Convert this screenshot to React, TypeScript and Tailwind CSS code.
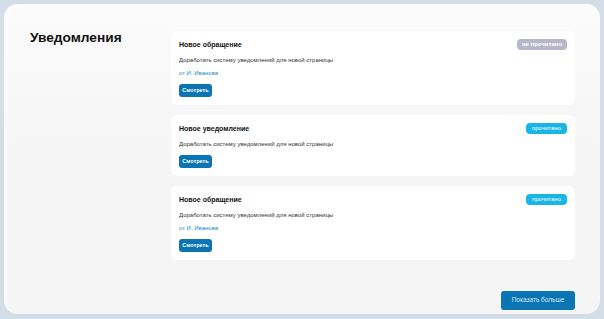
import React from "react";

type Notice = {
  title: string;
  text: string;
  author?: string;
  read: boolean;
};

const notices: Notice[] = [
  {
    title: "Новое обращение",
    text: "Доработать систему уведомлений для новой страницы",
    author: "от И. Иванова",
    read: false
  },
  {
    title: "Новое уведомление",
    text: "Доработать систему уведомлений для новой страницы",
    read: true
  },
  {
    title: "Новое обращение",
    text: "Доработать систему уведомлений для новой страницы",
    author: "от И. Иванова",
    read: true
  }
];

const Badge = ({ read }: { read: boolean }) =>
  read ? (
    <span className="flex h-[11px] w-[41px] items-center justify-center rounded-[4px] bg-[#17b6e4] text-[6px] leading-none text-white">
      прочитано
    </span>
  ) : (
    <span className="flex h-[11px] w-[50px] items-center justify-center rounded-[4px] bg-[#b8b7c9] text-[6px] font-bold leading-none text-white">
      не прочитано
    </span>
  );

const NoticeCard = ({ item }: { item: Notice }) => (
  <div className="flex flex-col rounded-[6px] bg-white px-2 pb-2 pt-2">
    {/* header */}
    <div className="flex h-[10px] items-center justify-between">
      <span className="text-[7px] font-bold leading-none text-[#111]">
        {item.title}
      </span>
      <Badge read={item.read} />
    </div>
    <p className="mt-[6px] h-[10px] text-[6px] leading-[10px] text-[#333]">
      {item.text}
    </p>
    {item.author && (
      <p className="mt-[3px] h-[10px] text-[6px] leading-[10px] text-[#1a8ec4]">
        {item.author}
      </p>
    )}
    <button className="mt-[6px] flex h-[13px] w-[33px] items-center justify-center rounded-[3px] bg-[#0b74b3] text-[5.5px] font-bold leading-none text-white">
      Смотреть
    </button>
  </div>
);

const App = () => {
  return (
    <div
      className="h-[319px] w-[604px] bg-[#d4dee9] pb-[5px] pl-[4px] pr-[4px] pt-[4px]"
      style={{ fontFamily: '"Liberation Sans", Arial, sans-serif' }}
    >
      <div className="flex h-full rounded-[14px] bg-gradient-to-b from-[#fbfbfb] via-[#f5f5f5] to-[#f5f5f5] pl-[26px] pr-[25px] pt-[24px] pb-[4px] shadow-[inset_2px_3px_4px_rgba(255,255,255,0.9)]">
        {/* left column */}
        <div className="w-[141px] shrink-0">
          <h1 className="text-[13.7px] font-bold leading-[20px] text-[#111]">
            Уведомления
          </h1>
        </div>
        {/* right column */}
        <div className="flex w-[404px] flex-col">
          <div className="mt-[3px] flex flex-col gap-[10px]">
            {notices.map((item, index) => (
              <NoticeCard item={item} key={index} />
            ))}
          </div>
          <div className="mt-auto flex justify-end">
            <button className="flex h-[19px] w-[74px] items-center justify-center rounded-[3px] bg-[#0b74b3] text-[6.5px] leading-none text-[#d3e8f4]">
              Показать больше
            </button>
          </div>
        </div>
      </div>
    </div>
  );
};

export default App;
